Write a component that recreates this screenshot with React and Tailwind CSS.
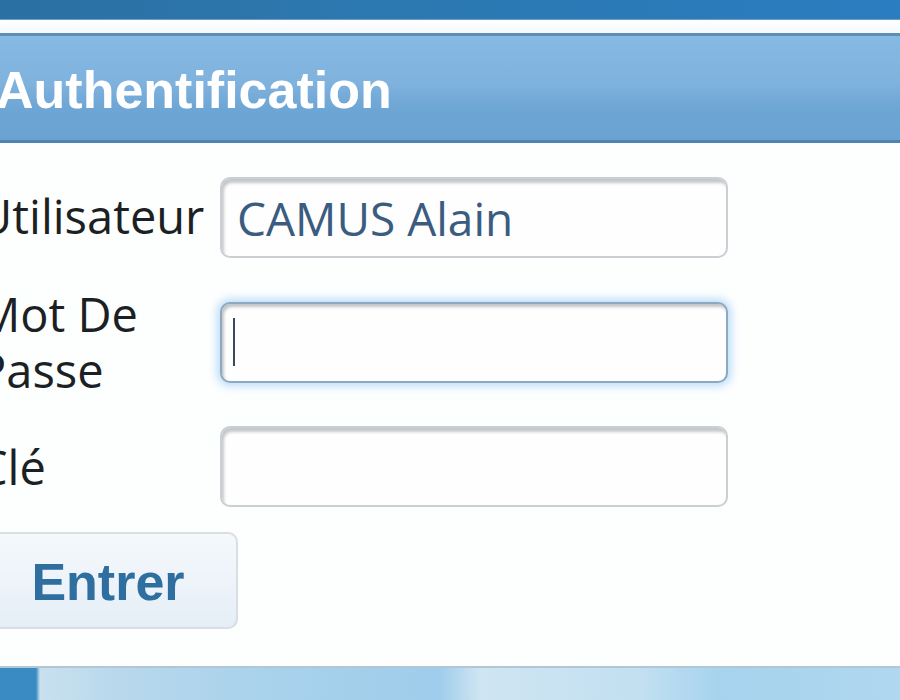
import React from "react";

function Field({ value, focused }) {
  return (
    <div
      className={
        "h-[81px] w-[508px] rounded-[10px] bg-[#fefefe] flex items-center pl-[15px] " +
        (focused
          ? "border-2 border-[#8ea8bf] shadow-[inset_2px_3px_3px_rgba(80,90,100,0.35),0_0_9px_3px_#b9dcf8]"
          : "border-2 border-[#c9cfd3] shadow-[inset_2px_4px_3px_rgba(90,100,110,0.35)]")
      }
    >
      {value ? (
        <span className="text-[46px] leading-none text-[#3a5c80]">{value}</span>
      ) : null}
      {focused ? <span className="block w-[2px] h-[48px] bg-[#3c4a58] ml-[-4px]" /> : null}
    </div>
  );
}

export default function App() {
  return (
    <div
      className="w-[900px] h-[700px] overflow-hidden flex flex-col bg-white"
      style={{ fontFamily: '"Open Sans", "Noto Sans", sans-serif' }}
    >
      <div className="h-[20px] shrink-0 bg-[linear-gradient(90deg,#2b70a2,#2c78b0_40%,#2a7dc0)] border-b border-[#6d9fc6]" />
      <div className="h-[13px] shrink-0 bg-[linear-gradient(180deg,#ffffff,#f4f9fc)]" />
      <div className="h-[110px] shrink-0 border-t-[3px] border-[#5f8eb2] border-b-[3px] border-b-[#4d84b2] bg-[linear-gradient(180deg,#86b9e4_0%,#80b2de_45%,#6da5d4_70%,#6aa3d2_100%)] flex items-center">
        <span
          className="ml-[-4px] mt-[4px] text-[52px] font-bold text-white leading-none"
          style={{ fontFamily: '"Liberation Sans", Arial, sans-serif' }}
        >
          Authentification
        </span>
      </div>
      <div className="flex-1 bg-[#fdfefe] pt-[34px] text-[#1c1f23]">
        <div className="ml-[-22px] grid grid-cols-[242px_508px] items-center gap-y-[28px] text-[47px] leading-[56px]">
          <span className="mt-[-4px]">Utilisateur</span>
          <Field value="CAMUS Alain" />
          <span className="w-[200px]">Mot De Passe</span>
          <Field focused />
          <span>Clé</span>
          <Field />
        </div>
        <div className="ml-[-22px] mt-[25px] w-[260px] h-[97px] rounded-[10px] border-2 border-[#d7dee4] bg-[linear-gradient(180deg,#f5f9fc,#e5eef7)] flex items-center justify-center">
          <span
            className="text-[52px] font-bold leading-none text-[#2f6fa0] mt-[2px]"
            style={{ fontFamily: '"Liberation Sans", Arial, sans-serif' }}
          >
            Entrer
          </span>
        </div>
      </div>
      <div className="h-[34px] shrink-0 border-t-2 border-[#b2c6d3] bg-[linear-gradient(90deg,#3a8bc3_0px,#3a8bc3_36px,#c9e0ee_40px,#b8d8ec_120px,#a9d2ec_260px,#9fcdeb_440px,#cfe5f2_480px,#c2e0f1_640px,#a6d3ee_720px,#b0d7ef_900px)]" />
    </div>
  );
}
